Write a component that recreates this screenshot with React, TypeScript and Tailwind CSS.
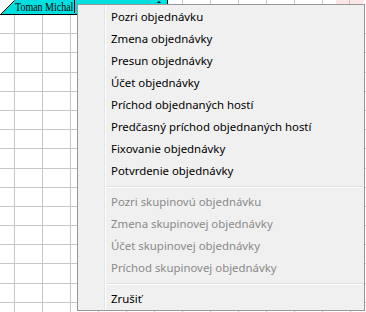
import React from 'react';

type Item = { label: string; disabled?: boolean } | { separator: true };

const items: Item[] = [
  { label: 'Pozri objednávku' },
  { label: 'Zmena objednávky' },
  { label: 'Presun objednávky' },
  { label: 'Účet objednávky' },
  { label: 'Príchod objednaných hostí' },
  { label: 'Predčasný príchod objednaných hostí' },
  { label: 'Fixovanie objednávky' },
  { label: 'Potvrdenie objednávky' },
  { separator: true },
  { label: 'Pozri skupinovú objednávku', disabled: true },
  { label: 'Zmena skupinovej objednávky', disabled: true },
  { label: 'Účet skupinovej objednávky', disabled: true },
  { label: 'Príchod skupinovej objednávky', disabled: true },
  { separator: true },
  { label: 'Zrušiť' },
];

const ROWS = 16;

const vLines =
  'bg-[repeating-linear-gradient(to_right,transparent_0,transparent_14px,#c6c6c6_14px,#c6c6c6_15px,transparent_15px,transparent_28px)]';

function ReservationTab() {
  return (
    <div className="relative w-[168px] h-[15px] shrink-0">
      <svg className="absolute inset-0" width="168" height="15" viewBox="0 0 168 15">
        <polygon points="0,15 15,0 168,0 168,15" fill="#00dfdf" />
        <path d="M0.5 14.5 L14.5 0.5 M0 14.5 H168 M167.5 0 V15 M74.5 0 V13" stroke="#000" strokeWidth="1" fill="none" />
        <path d="M157 3 L159 1 L161 3 Z" fill="#000" />
      </svg>
      <div className="relative pl-[15px] leading-[14px] text-[13.5px] text-black [font-family:'Liberation_Serif',serif]">
        <span className="inline-block origin-left scale-x-[0.74] whitespace-nowrap">Toman Michal</span>
      </div>
    </div>
  );
}

function ContextMenu() {
  return (
    <div className="absolute left-[77px] top-[4px] w-[288px] h-[307px] border border-[#979797] bg-[#f0f0f0] pt-[1px] pr-[1px] flex [font-family:'Noto_Sans',sans-serif] text-[11.4px]">
      <div className="w-[27px] shrink-0 border-r border-[#e2e3e3]" />
      <div className="w-px shrink-0 bg-white" />
      <div className="flex-1 flex flex-col">
        {items.map((it, i) =>
          'separator' in it ? (
            <div key={i} className="h-[9px] pt-[4px]">
              <div className="h-px bg-[#e0e0e0]" />
              <div className="h-px bg-white" />
            </div>
          ) : (
            <div
              key={i}
              className={
                'h-[22px] flex items-center pl-[5px] whitespace-nowrap ' +
                (it.disabled ? 'text-[#8a8a8a]' : 'text-black')
              }
            >
              {it.label}
            </div>
          )
        )}
      </div>
    </div>
  );
}

export default function App() {
  return (
    <div className="relative w-[366px] h-[312px] bg-white overflow-hidden">
      <div className={'flex flex-col ' + vLines}>
        <div className="flex h-[15px]">
          <ReservationTab />
          <div className="w-[168px] shrink-0 border-b border-[#c6c6c6]" />
          <div className="w-[14px] shrink-0 bg-[#fde6e6] border-r border-[#c6c6c6]" />
          <div className="w-[14px] shrink-0 bg-[#fde6e6]" />
        </div>
        {Array.from({ length: ROWS }).map((_, r) => (
          <div key={r} className="h-[19.2px] border-b border-[#c6c6c6]" />
        ))}
      </div>
      <ContextMenu />
    </div>
  );
}
